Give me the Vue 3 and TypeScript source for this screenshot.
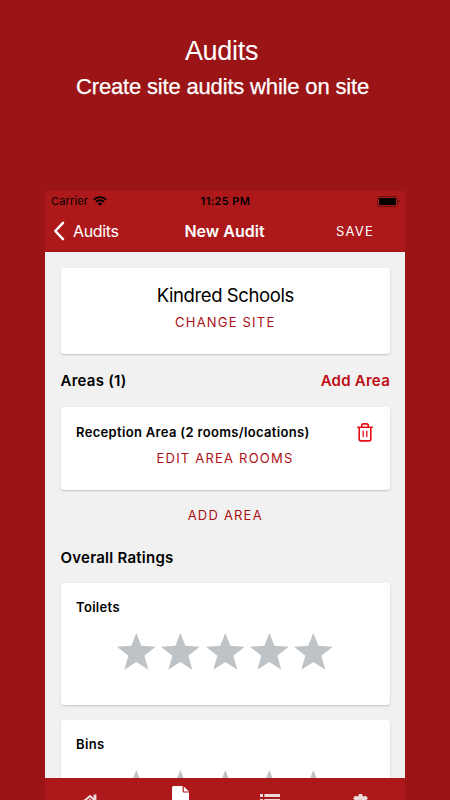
<script setup lang="ts">
const ratings: string[] = ['Toilets', 'Bins']
const stars = 5
</script>

<template>
  <main class="promo">
    <h1 class="promo-title">Audits</h1>
    <p class="promo-sub">Create site audits while on site</p>

    <section class="phone">
      <header class="top">
        <div class="status">
          <div class="carrier">
            <span>Carrier</span>
            <svg class="wifi" viewBox="0 0 14 10">
              <path d="M0.8 3.6a9 9 0 0 1 12.4 0M2.9 5.8a6 6 0 0 1 8.2 0" fill="none" stroke="#000" stroke-width="1.9" />
              <path d="M4.7 7.6a3.3 3.3 0 0 1 4.6 0L7 10z" fill="#000" />
            </svg>
          </div>
          <span class="time">11:25 PM</span>
          <svg class="battery" viewBox="0 0 23 11">
            <rect x="0.5" y="0.5" width="20" height="10" rx="2.7" fill="none" stroke="#000" stroke-opacity=".4" />
            <rect x="2" y="2" width="17" height="7" rx="1.3" />
            <path d="M21.7 3.8v3.4q1-.5 1-1.7t-1-1.7" fill-opacity=".5" />
          </svg>
        </div>
        <nav class="nav">
          <div class="back">
            <svg viewBox="0 0 12 20"><path d="M10 1.8 2.3 10l7.7 8.2" fill="none" stroke="#fff" stroke-width="2.5" stroke-linecap="round" stroke-linejoin="round" /></svg>
            <span>Audits</span>
          </div>
          <strong class="nav-title">New Audit</strong>
          <span class="save">SAVE</span>
        </nav>
      </header>

      <div class="content">
        <div class="card site">
          <div class="site-name">Kindred Schools</div>
          <div class="link change">CHANGE SITE</div>
        </div>

        <div class="heading areas">
          <span>Areas (1)</span>
          <span class="add">Add Area</span>
        </div>

        <div class="card area">
          <div class="area-row">
            <span class="label">Reception Area (2 rooms/locations)</span>
            <svg class="trash" viewBox="0 0 16 19" fill="none" stroke="#e60b14" stroke-width="1.6" stroke-linecap="round" stroke-linejoin="round">
              <path d="M.8 4.3h14.4M4.7 4.1V2.6Q4.7.9 6.4.9h3.2q1.7 0 1.7 1.7v1.5M2.2 4.5v11.6q0 1.8 1.8 1.8h8q1.8 0 1.8-1.8V4.5" />
              <path d="M6.2 8.2v5.3M9.8 8.2v5.3" stroke-width="1.3" />
            </svg>
          </div>
          <div class="link edit">EDIT AREA ROOMS</div>
        </div>

        <div class="link add-area">ADD AREA</div>
        <div class="heading overall">Overall Ratings</div>

        <div v-for="name in ratings" :key="name" class="card rating">
          <div class="label">{{ name }}</div>
          <div class="stars">
            <svg v-for="n in stars" :key="n" viewBox="0 0 116 110">
              <path d="M58 0 73 38 116 41 82 68 94 110 58 87 22 110 34 68 0 41 43 38Z" fill="#bdc3c7" />
            </svg>
          </div>
        </div>
      </div>

      <footer class="tabs">
        <svg class="home" viewBox="0 0 20 18"><path d="M0 9 10 .8l3.6 3V.6h2.8v5.4L20 9l-1.4 1.6L10 3.5l-8.6 7zM3 10.5l7-5.7 7 5.7V18H3z" fill="#eddada" /></svg>
        <svg class="doc" viewBox="0 0 17 23"><path d="M1.5 0H10.6v5.2q0 1.3 1.3 1.3H17V23H0V1.5Q0 0 1.5 0" fill="#fff" /><path d="M11.8.4 17 5.4h-5.2z" fill="#fff" /></svg>
        <svg class="list" viewBox="0 0 20 16"><path d="M0 0h3v3H0zM4.3 0H20v3H4.3zM0 5h3v3H0zM4.3 5H20v3H4.3zM0 10h3v3H0zM4.3 10H20v3H4.3z" fill="#eddada" /></svg>
        <svg class="gear" viewBox="0 0 16 16"><path d="M6.2 0h3.6l.5 2.2 1 .5 2.2-.9L16 4.5l-1.7 1.9v3.2l1.7 1.9-2.5 2.7-2.2-.9-1 .5-.5 2.2H6.2l-.5-2.2-1-.5-2.2.9L0 11.5l1.7-1.9V6.4L0 4.5l2.5-2.7 2.2.9 1-.5zM8 6a2 2 0 1 0 0 4 2 2 0 0 0 0-4" fill="#eddada" fill-rule="evenodd" /></svg>
      </footer>
    </section>
  </main>
</template>

<style>
body {
  overflow: hidden;
  background: #9b1517;
}
</style>

<style scoped>
* {
  box-sizing: border-box;
}
svg {
  display: block;
  flex: none;
}
.promo {
  height: 800px;
  overflow: hidden;
  display: flex;
  flex-direction: column;
  align-items: center;
  background: #9b1517;
  font-family: Inter, sans-serif;
  white-space: nowrap;
}
.promo-title,
.promo-sub {
  margin: 0;
  color: #fff;
  font-family: "Liberation Sans", sans-serif;
  font-weight: 400;
}
.promo-title {
  padding-top: 35px;
  padding-right: 7px;
  font-size: 27px;
  line-height: 32px;
  letter-spacing: -0.3px;
}
.promo-sub {
  padding-top: 6px;
  padding-right: 5px;
  font-size: 22px;
  line-height: 28px;
  letter-spacing: -0.17px;
  -webkit-text-stroke: 0.25px #fff;
}
.phone {
  width: 360px;
  height: 609px;
  margin-top: 90px;
  flex: none;
  display: flex;
  flex-direction: column;
  background: #f1f1f1;
}
.top {
  height: 61px;
  flex: none;
  background: #ad191b;
  border-bottom: 1px solid #a31114;
}
.status {
  height: 20px;
  padding: 0 5px 0 6px;
  display: grid;
  grid-template-columns: 1fr auto 1fr;
  align-items: center;
  font-size: 11px;
  line-height: 20px;
}
.carrier {
  display: flex;
  align-items: center;
  gap: 5px;
  letter-spacing: 0.15px;
}
.wifi {
  width: 14px;
  height: 10px;
}
.time {
  font-weight: 600;
  letter-spacing: 0.4px;
}
.battery {
  width: 23px;
  height: 11px;
  justify-self: end;
}
.nav {
  height: 40px;
  padding: 0 31px 0 8px;
  display: grid;
  grid-template-columns: 1fr auto 1fr;
  align-items: center;
  color: #fff;
}
.back {
  display: flex;
  align-items: center;
  gap: 8px;
  font-size: 16px;
  letter-spacing: -0.35px;
}
.back svg {
  width: 12px;
  height: 20px;
}
.nav-title {
  padding-left: 22px;
  font-size: 16px;
  font-weight: 600;
}
.save {
  justify-self: end;
  font-size: 13px;
  letter-spacing: 1.2px;
}
.content {
  flex: 1;
  min-height: 0;
  overflow: hidden;
  padding: 16px 15px 0 15.5px;
}
.card {
  background: #fff;
  border-radius: 3px;
  box-shadow: 0 1px 2px rgba(0, 0, 0, 0.2);
}
.site {
  height: 86px;
  padding-top: 15px;
  text-align: center;
}
.site-name {
  font-size: 18.5px;
  line-height: 25px;
  letter-spacing: -0.4px;
}
.link {
  color: #ab1116;
  font-size: 13px;
  line-height: 20px;
  letter-spacing: 1.2px;
  text-align: center;
}
.change {
  padding-top: 4px;
}
.heading {
  font-size: 15px;
  font-weight: 600;
  line-height: 20px;
  letter-spacing: 0.25px;
}
.areas {
  display: flex;
  justify-content: space-between;
  padding: 17px 0 16px;
}
.add {
  color: #bd0d13;
}
.area {
  height: 83px;
  padding: 15px 16px 0 15.5px;
}
.area-row {
  display: flex;
  align-items: center;
  justify-content: space-between;
  height: 20px;
}
.label {
  font-size: 13px;
  font-weight: 600;
  line-height: 18px;
  letter-spacing: 0.33px;
}
.trash {
  width: 16px;
  height: 19px;
  margin-right: 1px;
}
.edit {
  padding-top: 6px;
}
.add-area {
  padding-top: 14.5px;
}
.overall {
  padding: 23.5px 0 15px;
}
.rating {
  height: 122px;
  padding: 15px 16px 0 15.5px;
  margin-bottom: 15px;
}
.stars {
  display: flex;
  justify-content: center;
  gap: 5.5px;
  padding-top: 17px;
}
.stars svg {
  width: 38.7px;
  height: 36.7px;
}
.tabs {
  height: 22px;
  flex: none;
  overflow: hidden;
  display: grid;
  grid-template-columns: repeat(4, 1fr);
  justify-items: center;
  align-items: start;
  background: #ad191b;
}
.home {
  width: 20px;
  height: 18px;
  margin-top: 16px;
}
.doc {
  width: 17px;
  height: 23px;
  margin-top: 8px;
}
.list {
  width: 20px;
  height: 16px;
  margin-top: 16px;
}
.gear {
  width: 15px;
  height: 15px;
  margin-top: 16px;
}
</style>
